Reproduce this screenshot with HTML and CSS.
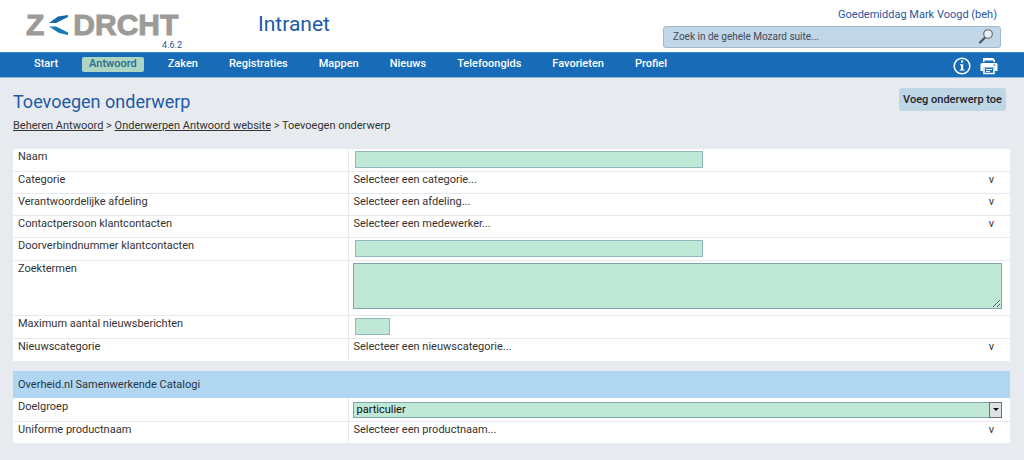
FILE: index.html
```
<!DOCTYPE html>
<html lang="nl">
<head>
<meta charset="utf-8">
<title>Toevoegen onderwerp</title>
<link rel="stylesheet" href="styles.css">
</head>
<body>
<header class="header">
  <div class="brand">
    <div class="logo"><span>Z</span><svg class="logo-mark" width="21" height="20" viewBox="0 0 21 20"><path d="M1 8 10 1.500 20 0 20 2 8 8z" fill="#1467a8"/><path d="M1 11.500 8 11.500 20 17.500 20 20 11 18z" fill="#1878bb"/></svg><span>DRCHT</span></div>
    <div class="version">4.6.2</div>
  </div>
  <div class="site">Intranet</div>
  <div class="user">
    <div class="greeting">Goedemiddag Mark Voogd (beh)</div>
    <form class="search">
      <input class="search-input" type="text" aria-label="Zoeken" placeholder="Zoek in de gehele Mozard suite...">
      <button class="icon-button" type="button" aria-label="Zoek"><svg width="16" height="16" viewBox="0 0 16 16"><path d="M2 14.500 7.500 9" stroke="#555" stroke-width="2.2" stroke-linecap="round"/><circle cx="10" cy="6" r="4.300" fill="#e4eef6" stroke="#666" stroke-width="1.1"/></svg></button>
    </form>
  </div>
</header>
<nav class="nav">
  <a class="nav-link" href="#">Start</a>
  <a class="nav-link active" href="#">Antwoord</a>
  <a class="nav-link" href="#">Zaken</a>
  <a class="nav-link" href="#">Registraties</a>
  <a class="nav-link" href="#">Mappen</a>
  <a class="nav-link" href="#">Nieuws</a>
  <a class="nav-link" href="#">Telefoongids</a>
  <a class="nav-link" href="#">Favorieten</a>
  <a class="nav-link" href="#">Profiel</a>
  <div class="nav-tools">
    <button class="icon-button" type="button" aria-label="Informatie"><svg width="18" height="18" viewBox="0 0 18 18"><circle cx="9" cy="9" r="7.800" fill="none" stroke="#fff" stroke-width="1.600"/><path d="M8 3.600h2.200v2H8zM7 7.200h3.200v5.200h1.200v1.200H6.800v-1.200H8V8.400H7z" fill="#fff"/></svg></button>
    <button class="icon-button" type="button" aria-label="Afdrukken"><svg width="18" height="18" viewBox="0 0 18 18"><path d="M3 5V1h10l2 2v2H13.500V3.500H4.500V5z" fill="#fff"/><path d="M2 6h14q1.500 0 1.500 1.500V14h-2.500v-3.500H3V14H.5V7.500Q.5 6 2 6z" fill="#fff"/><path d="M4 10.500v6h10v-6" fill="none" stroke="#fff" stroke-width="1.600"/><path d="M6 12.500h6M6 14.500h4" stroke="#fff"/><path d="M13.500 8h2" stroke="#176bb7"/></svg></button>
  </div>
</nav>
<main class="main">
  <div class="page-head">
    <div>
      <h1 class="title">Toevoegen onderwerp</h1>
      <div class="crumbs"><a href="#">Beheren Antwoord</a> &gt; <a href="#">Onderwerpen Antwoord website</a> &gt; Toevoegen onderwerp</div>
    </div>
    <button class="add" type="button">Voeg onderwerp toe</button>
  </div>
  <table class="fields">
    <tr><th><label for="naam">Naam</label></th><td><input id="naam" class="field" type="text"></td></tr>
    <tr><th>Categorie</th><td><button class="picker" type="button"><span>Selecteer een categorie...</span><span>v</span></button></td></tr>
    <tr><th>Verantwoordelijke afdeling</th><td><button class="picker" type="button"><span>Selecteer een afdeling...</span><span>v</span></button></td></tr>
    <tr><th>Contactpersoon klantcontacten</th><td><button class="picker" type="button"><span>Selecteer een medewerker...</span><span>v</span></button></td></tr>
    <tr><th><label for="nummer">Doorverbindnummer klantcontacten</label></th><td><input id="nummer" class="field" type="text"></td></tr>
    <tr><th><label for="termen">Zoektermen</label></th><td><textarea id="termen" class="area"></textarea></td></tr>
    <tr><th><label for="max">Maximum aantal nieuwsberichten</label></th><td><input id="max" class="field short" type="text"></td></tr>
    <tr><th>Nieuwscategorie</th><td><button class="picker" type="button"><span>Selecteer een nieuwscategorie...</span><span>v</span></button></td></tr>
  </table>
  <section class="catalog">
    <h2 class="section-title">Overheid.nl Samenwerkende Catalogi</h2>
    <table class="fields">
      <tr><th class="roomy"><label for="doel">Doelgroep</label></th><td><div class="select-wrap"><select id="doel" class="select"><option>particulier</option></select><span class="arrow"></span></div></td></tr>
      <tr><th>Uniforme productnaam</th><td><button class="picker" type="button"><span>Selecteer een productnaam...</span><span>v</span></button></td></tr>
    </table>
  </section>
</main>
</body>
</html>
```
FILE: styles.css
```
* { box-sizing: border-box; }
body { margin: 0; background: #e7ebef; color: #333; font: 11px/15px Roboto, sans-serif; }
button, input, select, textarea { font: inherit; color: inherit; margin: 0; }
button { cursor: pointer; }
.header { display: flex; height: 52px; background: #fff; padding: 0 23px 0 26px; }
.brand { width: 232px; padding-top: 11px; }
.logo { display: flex; align-items: center; height: 27px; color: #9c9b98; font: bold 30px/27px "Liberation Sans", sans-serif; -webkit-text-stroke: 1px #9c9b98; }
.logo-mark { margin: 0 4px; }
.version { width: 156px; padding-top: 2px; text-align: right; color: #2c55a0; font-size: 9px; line-height: 10px; }
.site { padding-top: 10px; color: #1c5aa8; font-size: 21px; line-height: 28px; }
.user { margin-left: auto; width: 338px; padding-top: 7px; }
.greeting { padding-right: 4px; text-align: right; color: #2c55a0; line-height: 16px; }
.search { display: flex; align-items: center; height: 22px; margin-top: 3px; padding: 0 6px 2px 9px; border: 1px solid #a3b9c9; border-radius: 3px; background: #c1d6e7; }
.search-input { flex: 1; padding: 0; border: 0; outline: 0; background: none; font-size: 10px; }
.search-input::placeholder { color: #444c54; opacity: 1; }
.icon-button { display: flex; padding: 0; border: 0; background: none; }
.nav { display: flex; align-items: flex-start; gap: 17px; height: 26px; padding: 4px 26px 0 27px; border-top: 1px solid #3b86c6; border-bottom: 1px solid #8fbbe0; background: #176bb7; }
.nav-link { padding: 0 7px 1px; border-radius: 2px; color: #fff; font-weight: 500; line-height: 14px; text-decoration: none; }
.nav-link.active { background: #add5c3; color: #2b6b8c; }
.nav-tools { display: flex; gap: 9px; margin-left: auto; }
.main { padding: 10px 14px 16px 13px; }
.page-head { display: flex; justify-content: space-between; align-items: flex-start; }
.title { margin: 0; color: #1c5aa8; font-size: 18px; font-weight: 400; line-height: 28px; }
.crumbs { margin-top: 2px; padding-bottom: 16px; }
.crumbs a { color: inherit; }
.add { height: 23px; margin-right: 4px; padding: 0 4px 1px; border: 0; border-radius: 3px; background: #bfd6e6; color: #20262c; font-weight: 500; }
.fields { width: 100%; border-collapse: collapse; table-layout: fixed; background: #fff; }
.fields tr + tr { border-top: 1px solid #e6eaee; }
.fields th { width: 335px; padding: 0 5px; border-right: 1px solid #e6eaee; font-weight: 400; text-align: left; vertical-align: top; }
.fields th.roomy { padding-top: 1px; }
.fields td { height: 22px; padding: 0 8px 0 4px; vertical-align: top; }
.field { display: block; width: 348px; height: 17px; margin: 2px 0 3px 2px; border: 1px solid #91b9b9; background: #bfe8d6; }
.field.short { width: 35px; }
.area { display: block; width: 100%; height: 46px; margin: 2px 0 6px; border: 1px solid #7fa7ab; background: #bfe8d6; resize: vertical; }
.picker { display: flex; justify-content: space-between; width: 100%; padding: 0 8px 0 1px; border: 0; background: none; }
.catalog { margin-top: 10px; }
.section-title { margin: 0; padding: 5px; background: #b1d6f1; color: #25343f; font-size: 11px; font-weight: 400; line-height: 17px; }
.select-wrap { position: relative; margin: 4px 0 3px; }
.select { display: block; width: 100%; height: 16px; padding: 0 3px; border: 1px solid #7fa7ab; border-radius: 0; background: #bfe8d6; color: #111; line-height: 14px; appearance: none; }
.arrow { position: absolute; top: 0; right: 0; display: grid; place-items: center; width: 13px; height: 16px; border: 1px solid #66727c; background: #dfe2e5; pointer-events: none; }
.arrow::after { content: ""; border: 3px solid transparent; border-top-color: #111; border-bottom: 0; }
```
